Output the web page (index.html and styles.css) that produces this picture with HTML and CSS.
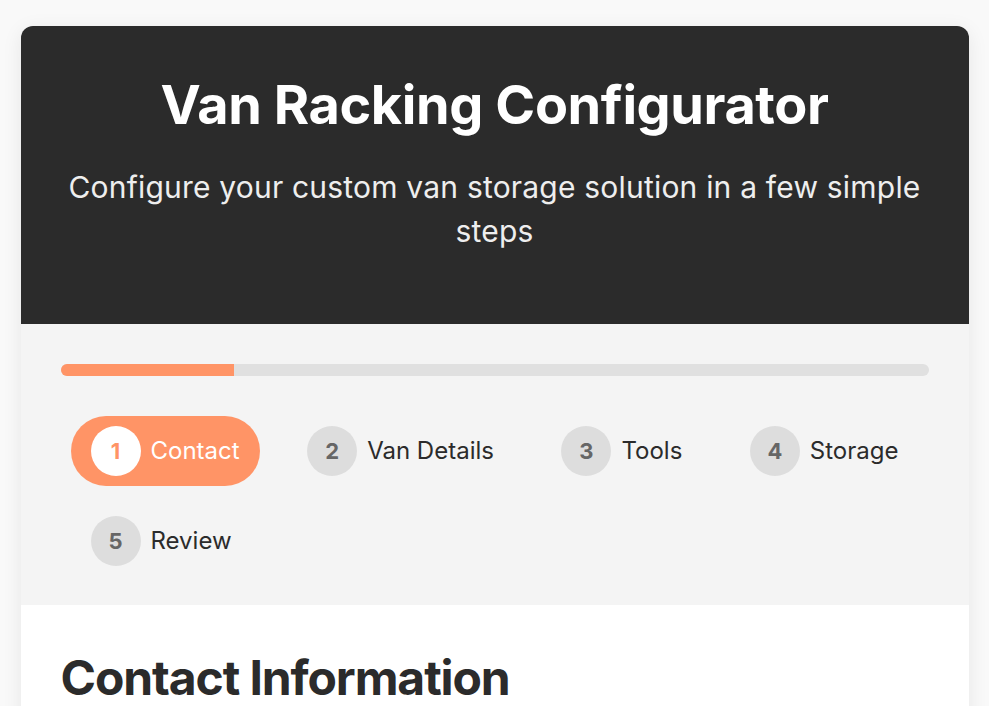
FILE: index.html
```html
<!DOCTYPE html>
<html lang="en">
<head>
<meta charset="utf-8">
<title>Van Racking Configurator</title>
<link rel="stylesheet" href="styles.css">
</head>
<body>
<div class="card">
  <header class="hero">
    <h1 class="hero-title">Van Racking Configurator</h1>
    <p class="hero-sub">Configure your custom van storage solution in a few simple steps</p>
  </header>
  <section class="progress">
    <div class="bar"><div class="bar-fill" style="width: 20%"></div></div>
    <div class="steps">
      <div class="step active"><span class="num">1</span><span class="label">Contact</span></div>
      <div class="step"><span class="num">2</span><span class="label">Van Details</span></div>
      <div class="step"><span class="num">3</span><span class="label">Tools</span></div>
      <div class="step"><span class="num">4</span><span class="label">Storage</span></div>
      <div class="step"><span class="num">5</span><span class="label">Review</span></div>
    </div>
  </section>
  <section class="content">
    <h2 class="content-title">Contact Information</h2>
  </section>
</div>
</body>
</html>
```
FILE: styles.css
```css
* { box-sizing: border-box; }
html, body { margin: 0; padding: 0; }
body {
  background: #f9f9f9;
  font-family: Inter, "Noto Sans", sans-serif;
  color: #2b2b2b;
  padding-top: 26px;
}
.card {
  width: 948px;
  margin: 0 auto;
  background: #ffffff;
  border-radius: 12px;
  overflow: hidden;
  box-shadow: 0 4px 20px rgba(0,0,0,0.08);
}
.hero {
  background: #2b2b2b;
  color: #ffffff;
  text-align: center;
  padding: 47px 40px 71px;
}
.hero-title {
  margin: 0 0 27px;
  font-size: 54px;
  line-height: 1.2;
  font-weight: 700;
  letter-spacing: -0.4px;
}
.hero-sub {
  margin: 0;
  font-size: 30px;
  line-height: 44px;
  letter-spacing: 0.2px;
  color: #eeeeee;
  font-weight: 400;
}
.progress {
  background: #f4f4f4;
  padding: 40px 40px 19px;
}
.bar {
  height: 12px;
  background: #e0e0e0;
  border-radius: 6px;
  overflow: hidden;
  margin-bottom: 30px;
}
.bar-fill {
  height: 100%;
  background: #ff9466;
}
.steps {
  display: flex;
  flex-wrap: wrap;
  justify-content: space-between;
}
.step {
  display: flex;
  align-items: center;
  gap: 10px;
  margin: 10px;
  padding: 10px 20px;
  border-radius: 35px;
}
.num {
  width: 50px;
  height: 50px;
  flex: none;
  border-radius: 50%;
  background: #dddddd;
  color: #666666;
  font-weight: 700;
  font-size: 22px;
  display: flex;
  align-items: center;
  justify-content: center;
}
.label {
  font-size: 24px;
  color: #2b2b2b;
}
.step.active {
  background: #ff9466;
}
.step.active .num {
  background: #ffffff;
  color: #ff9466;
}
.step.active .label {
  color: #ffffff;
}
.content {
  padding: 44px 40px 40px;
}
.content-title {
  margin: 0;
  font-size: 48px;
  line-height: 1.2;
  font-weight: 700;
  letter-spacing: -1.1px;
}
```
